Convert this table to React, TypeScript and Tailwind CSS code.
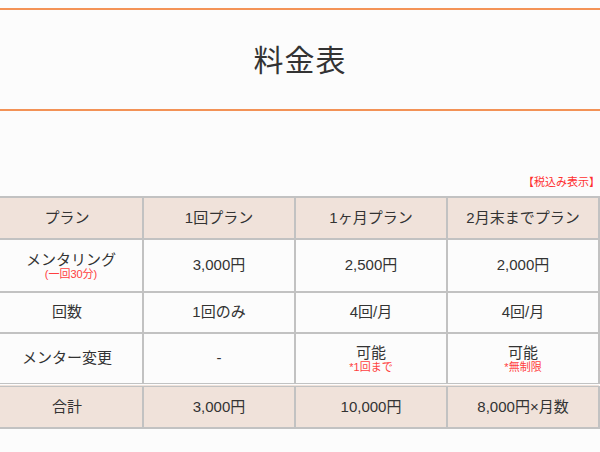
import React from "react";

const cellB = "border-2 border-[#c2c2c2]";
const sumB = "border-2 border-t-4 border-double border-[#c2c2c2]";

export default function App() {
  const font = { fontFamily: '"Liberation Sans", "Noto Sans CJK JP", sans-serif' };
  return (
    <div className="w-[600px] h-[452px] overflow-hidden bg-[#fcfcfc] text-[#333]" style={font}>
      <div className="h-[8px]" />
      <div className="h-[103px] border-y-2 border-[#f39256] flex items-center justify-center">
        <h1 className="text-[30px] leading-none tracking-[1px] text-[#333] pt-[2px]">料金表</h1>
      </div>
      <div className="h-[64px]" />
      <div className="flex justify-end pr-0 text-[11px] leading-[14px] text-[#ff3030]">【税込み表示】</div>
      <div className="h-[7px]" />
      <table className="ml-[-10px] w-[610px] border-collapse table-fixed text-center text-[15px]">
        <tbody>
          <tr className="h-[42px] bg-[#f0e2da]">
            <td className={cellB}>プラン</td>
            <td className={cellB}>1回プラン</td>
            <td className={cellB}>1ヶ月プラン</td>
            <td className={cellB}>2月末までプラン</td>
          </tr>
          <tr className="h-[53px]">
            <td className={cellB}>
              <div className="leading-[17px] pl-[8px]">メンタリング</div>
              <div className="text-[11px] leading-[13px] text-[#ff4040] pl-[8px]">(一回30分)</div>
            </td>
            <td className={cellB}>3,000円</td>
            <td className={cellB}>2,500円</td>
            <td className={cellB}>2,000円</td>
          </tr>
          <tr className="h-[41px]">
            <td className={cellB}>回数</td>
            <td className={cellB}>1回のみ</td>
            <td className={cellB}>4回/月</td>
            <td className={cellB}>4回/月</td>
          </tr>
          <tr className="h-[52px]">
            <td className={cellB}>メンター変更</td>
            <td className={cellB}>-</td>
            <td className={cellB}>
              <div className="leading-[17px]">可能</div>
              <div className="text-[11px] leading-[13px] text-[#ff4040]">*1回まで</div>
            </td>
            <td className={cellB}>
              <div className="leading-[17px]">可能</div>
              <div className="text-[11px] leading-[13px] text-[#ff4040]">*無制限</div>
            </td>
          </tr>
          <tr className="h-[43px] bg-[#f0e2da]">
            <td className={sumB}>合計</td>
            <td className={sumB}>3,000円</td>
            <td className={sumB}>10,000円</td>
            <td className={sumB}>8,000円×月数</td>
          </tr>
        </tbody>
      </table>
    </div>
  );
}
